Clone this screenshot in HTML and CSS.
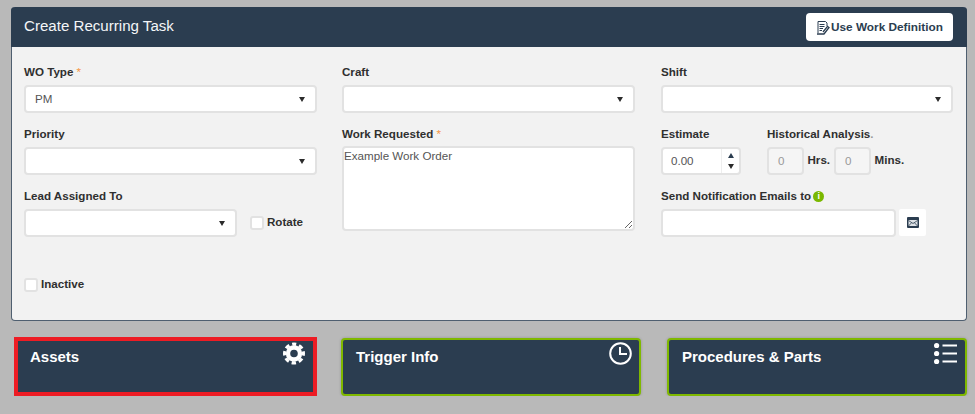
FILE: index.html
```html
<!DOCTYPE html>
<html lang="en">
<head>
    <meta charset="UTF-8">
    <meta name="viewport" content="width=device-width, initial-scale=1.0">
    <title>Create Recurring Task</title>
    <link rel="stylesheet" href="styles.css">
</head>
<body>
    <div class="panel">
        <div class="panel-header">
            <h1>Create Recurring Task</h1>
            <button class="def-btn">
                <svg class="def-icon" width="14" height="15" viewBox="0 0 14 15" fill="none" stroke="#2b3d50" stroke-width="1">
                    <path d="M2 13V1.5h7.5L11 3v3"/>
                    <path d="M3.5 4.5h5M3.5 6.5h5M3.5 8.5h3.5M3.5 10.5h2.5"/>
                    <path d="M1 14h7l5-6.5-1.5-1.2L7 12" stroke-width="1.3"/>
                </svg>
                Use Work Definition
            </button>
        </div>
        <div class="panel-body">
            <div class="col">
                <div class="field">
                    <label>WO Type <span class="req">*</span></label>
                    <div class="select">PM<span class="caret"></span></div>
                </div>
                <div class="field">
                    <label>Priority</label>
                    <div class="select"><span class="caret"></span></div>
                </div>
                <div class="field">
                    <label>Lead Assigned To</label>
                    <div class="lead-row">
                        <div class="select lead-select"><span class="caret"></span></div>
                        <label class="check"><input type="checkbox"> Rotate</label>
                    </div>
                </div>
                <label class="check inactive"><input type="checkbox"> Inactive</label>
            </div>
            <div class="col">
                <div class="field">
                    <label>Craft</label>
                    <div class="select"><span class="caret"></span></div>
                </div>
                <div class="field">
                    <label>Work Requested <span class="req">*</span></label>
                    <textarea class="work-text">Example Work Order</textarea>
                </div>
            </div>
            <div class="col col-last">
                <div class="field">
                    <label>Shift</label>
                    <div class="select"><span class="caret"></span></div>
                </div>
                <div class="field estimate-row">
                    <div class="estimate">
                        <label>Estimate</label>
                        <div class="spinner">
                            <span class="spinner-value">0.00</span>
                            <span class="spinner-btns">
                                <span class="caret caret-up"></span>
                                <span class="caret"></span>
                            </span>
                        </div>
                    </div>
                    <div>
                        <label>Historical Analysis<span class="faint">.</span></label>
                        <div class="hist-row">
                            <span class="hist-input">0</span>
                            <b>Hrs.</b>
                            <span class="hist-input">0</span>
                            <b>Mins.</b>
                        </div>
                    </div>
                </div>
                <div class="field">
                    <label>Send Notification Emails to <span class="info">i</span></label>
                    <div class="email-row">
                        <div class="email-input"></div>
                        <div class="email-btn">
                            <svg width="12" height="11" viewBox="0 0 12 11">
                                <rect width="12" height="11" rx="1" fill="#2b3d50"/>
                                <rect x="1.5" y="3" width="9" height="6" fill="#dfe3e7"/>
                                <path d="M1.5 3.5L6 6.5l4.5-3M1.5 9L4.5 5.8M10.5 9L7.5 5.8" fill="none" stroke="#2b3d50" stroke-width="0.8"/>
                            </svg>
                        </div>
                    </div>
                </div>
            </div>
        </div>
    </div>

    <div class="cards">
        <div class="card card-active">
            <span>Assets</span>
            <svg class="card-icon" width="22" height="23" viewBox="0 0 22 23" fill="none" stroke="#fff">
                <circle cx="11" cy="11.5" r="6" stroke-width="4.4"/>
                <circle cx="11" cy="11.5" r="9.4" stroke-width="3.2" stroke-dasharray="4.4 2.98" stroke-dashoffset="2.2" transform="rotate(-90 11 11.5)"/>
            </svg>
        </div>
        <div class="card card-mid">
            <span>Trigger Info</span>
            <svg class="card-icon" width="23" height="23" viewBox="0 0 23 23" fill="none" stroke="#fff" stroke-width="2">
                <circle cx="11.5" cy="11.5" r="10.3"/>
                <path d="M11 5V12H18"/>
            </svg>
        </div>
        <div class="card">
            <span>Procedures &amp; Parts</span>
            <svg class="card-icon card-icon-list" width="23" height="23" viewBox="0 0 23 23" fill="#fff" stroke="none">
                <circle cx="2.6" cy="3.5" r="2.6"/>
                <circle cx="2.6" cy="11.5" r="2.6"/>
                <circle cx="2.6" cy="19.5" r="2.6"/>
                <rect x="8.5" y="2.5" width="14.5" height="2"/>
                <rect x="8.5" y="10.5" width="14.5" height="2"/>
                <rect x="8.5" y="18.5" width="14.5" height="2"/>
            </svg>
        </div>
    </div>
</body>
</html>
```

FILE: styles.css
```css
body {
    font-family: 'Liberation Sans', Arial, sans-serif;
    font-size: 11.6px;
    background-color: #b9b9b9;
    color: #2f2f2f;
    margin: 0;
    padding: 7px 8px 0 11px;
}

.panel {
    height: 314px;
    box-sizing: border-box;
    background-color: #f2f2f2;
    border: 1px solid #4f5f70;
    border-top: none;
    border-radius: 4px;
}

.panel-header {
    height: 40px;
    box-sizing: border-box;
    margin: 0 -1px;
    padding: 6px 14px 0 13px;
    background-color: #2b3d50;
    border-radius: 4px 4px 0 0;
    display: flex;
    justify-content: space-between;
    align-items: flex-start;
}

h1 {
    margin: 4px 0 0;
    font-size: 15.1px;
    font-weight: normal;
    line-height: 18px;
    color: #f4f6f8;
}

.def-btn {
    width: 147px;
    height: 28px;
    padding: 0 0 0 10px;
    border: none;
    border-radius: 4px;
    background-color: #fff;
    color: #2b3d50;
    font-family: inherit;
    font-size: 11.8px;
    font-weight: bold;
    display: flex;
    align-items: center;
    gap: 1px;
}

.panel-body {
    padding: 17px 12px 0;
    display: flex;
    gap: 25px;
}

.col {
    width: 293px;
}

.col-last {
    width: 292px;
    margin-left: 1px;
}

.field {
    margin-bottom: 13px;
}

label {
    display: block;
    height: 16px;
    margin-bottom: 5px;
    line-height: 16px;
    font-weight: bold;
}

.req {
    color: #f79646;
    font-weight: normal;
}

.faint {
    color: #999;
}

.select {
    position: relative;
    height: 28px;
    box-sizing: border-box;
    padding-left: 9px;
    background-color: #fff;
    border: 2px solid #e2e2e2;
    border-radius: 4px;
    line-height: 23px;
    color: #555;
}

.select .caret {
    position: absolute;
    right: 10px;
    top: 10px;
}

.caret {
    display: block;
    width: 0;
    height: 0;
    border-left: 3.5px solid transparent;
    border-right: 3.5px solid transparent;
    border-top: 5px solid #2b2b2b;
}

.caret-up {
    border-top: none;
    border-bottom: 5px solid #2b3d50;
}

.lead-row {
    display: flex;
    align-items: center;
}

.lead-select {
    width: 213px;
}

.check {
    display: flex;
    align-items: flex-start;
    gap: 3px;
    margin: 0;
    height: 14px;
    line-height: 11px;
}

.check input {
    appearance: none;
    width: 14px;
    height: 14px;
    margin: 0;
    background-color: #fff;
    border: 2px solid #e2e2e2;
    border-radius: 3px;
}

.lead-row .check {
    margin-left: 13px;
}

.inactive {
    margin-top: 41px;
}

.work-text {
    display: block;
    width: 100%;
    height: 85px;
    box-sizing: border-box;
    padding: 1px 0 0;
    margin-top: -1px;
    background-color: #fff;
    border: 2px solid #e2e2e2;
    border-radius: 4px;
    font-family: inherit;
    font-size: 11.6px;
    line-height: 14px;
    color: #555;
    outline: none;
}

.estimate-row {
    display: flex;
    gap: 26px;
}

.estimate {
    width: 80px;
}

.spinner {
    height: 28px;
    box-sizing: border-box;
    display: flex;
    background-color: #fff;
    border: 2px solid #e2e2e2;
    border-radius: 4px;
    line-height: 23px;
    color: #555;
}

.spinner-value {
    width: 50px;
    padding-left: 8px;
    border-right: 1px solid #eee;
}

.spinner-btns {
    flex: 1;
    display: flex;
    flex-direction: column;
    align-items: center;
    justify-content: space-between;
    padding: 4px 0;
}

.hist-row {
    display: flex;
    align-items: center;
    gap: 4px;
}

.hist-row b {
    margin-top: -4px;
}

.hist-input {
    width: 36.5px;
    height: 28px;
    box-sizing: border-box;
    padding-left: 9px;
    background-color: #f5f5f5;
    border: 2px solid #e2e2e2;
    border-radius: 4px;
    line-height: 23px;
    color: #999;
}

.info {
    display: inline-block;
    width: 11px;
    height: 11px;
    margin-left: -1px;
    background-color: #7ab800;
    border-radius: 50%;
    color: #fff;
    font-size: 9px;
    line-height: 11px;
    text-align: center;
    vertical-align: 1px;
}

.email-row {
    display: flex;
    gap: 3px;
}

.email-input {
    width: 235px;
    height: 28px;
    box-sizing: border-box;
    background-color: #fff;
    border: 2px solid #e2e2e2;
    border-radius: 4px;
}

.email-btn {
    width: 27px;
    height: 27px;
    display: flex;
    align-items: center;
    justify-content: center;
    background-color: #fff;
    border-radius: 2px;
}

.cards {
    margin-top: 16px;
    margin-left: 3px;
    display: flex;
}

.card {
    position: relative;
    width: 300px;
    height: 58px;
    box-sizing: border-box;
    padding: 8px 13px;
    background-color: #2b3d50;
    border: 2px solid #7fb800;
    border-radius: 4px;
    box-shadow: 0 0 3px rgba(0, 0, 0, 0.2);
    color: #fff;
    font-size: 15px;
    font-weight: bold;
    line-height: 18px;
}

.card-active {
    width: 303px;
    height: 59px;
    padding: 7px 12px;
    border: 4px solid #ed1c24;
    border-radius: 0;
    box-shadow: 0 1px 0 #8f9f30;
}

.card-mid {
    margin: 1px 26px 0 24px;
}

.card:last-child {
    margin-top: 1px;
}

.card-icon {
    position: absolute;
    right: 7px;
    top: 2px;
}

.card-active .card-icon {
    right: 8px;
    top: 1px;
}

.card-icon-list {
    right: 8px;
}
```
